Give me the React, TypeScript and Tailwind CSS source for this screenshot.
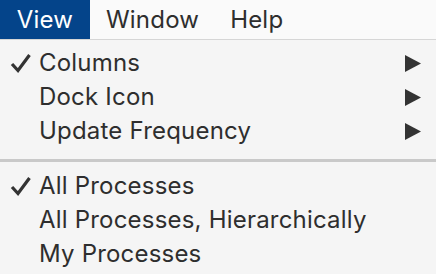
import React from "react";

type Item = { label: string; checked?: boolean; submenu?: boolean };

const groups: Item[][] = [
  [
    { label: "Columns", checked: true, submenu: true },
    { label: "Dock Icon", submenu: true },
    { label: "Update Frequency", submenu: true },
  ],
  [
    { label: "All Processes", checked: true },
    { label: "All Processes, Hierarchically" },
    { label: "My Processes" },
  ],
];

function Check() {
  return (
    <svg width="21" height="20" viewBox="0 0 21 20" className="shrink-0">
      <path d="M2 11 L8 17.5 L19.5 2" fill="none" stroke="#333" strokeWidth="3.2" strokeLinejoin="miter" />
    </svg>
  );
}

function Arrow() {
  return (
    <svg width="16" height="17" viewBox="0 0 16 17">
      <path d="M0 0 L16 8.5 L0 17 Z" fill="#333" />
    </svg>
  );
}

function Row({ item }: { item: Item }) {
  return (
    <div className="flex h-[34px] items-center pl-[10px] pr-[15px]">
      <div className="w-[29px]">{item.checked && <Check />}</div>
      <span className="flex-1 text-[#2e2e2e]">{item.label}</span>
      {item.submenu && <Arrow />}
    </div>
  );
}

export default function App() {
  return (
    <div className="h-[274px] w-[436px] overflow-hidden bg-[#f5f5f5] text-[24px] leading-none tracking-[0.2px]" style={{ fontFamily: "Inter, 'Liberation Sans', sans-serif" }}>
      {/* menu bar */}
      <div className="flex h-[40px] items-stretch border-b border-[#d6d6d6] bg-[#fafafa]">
        <div className="flex w-[90px] items-center justify-center bg-[#04448a] text-white">View</div>
        <div className="flex items-center pl-[16px] text-[#2e2e2e]">Window</div>
        <div className="flex items-center pl-[31px] text-[#2e2e2e]">Help</div>
      </div>

      {/* dropdown */}
      <div className="pt-[6px]">
        {groups.map((g, i) => (
          <div key={i}>
            {i > 0 && <div className="mt-[11px] mb-[7px] h-[3px] bg-[#c9c9c9]" />}
            {g.map((item) => (
              <Row key={item.label} item={item} />
            ))}
          </div>
        ))}
      </div>
    </div>
  );
}
